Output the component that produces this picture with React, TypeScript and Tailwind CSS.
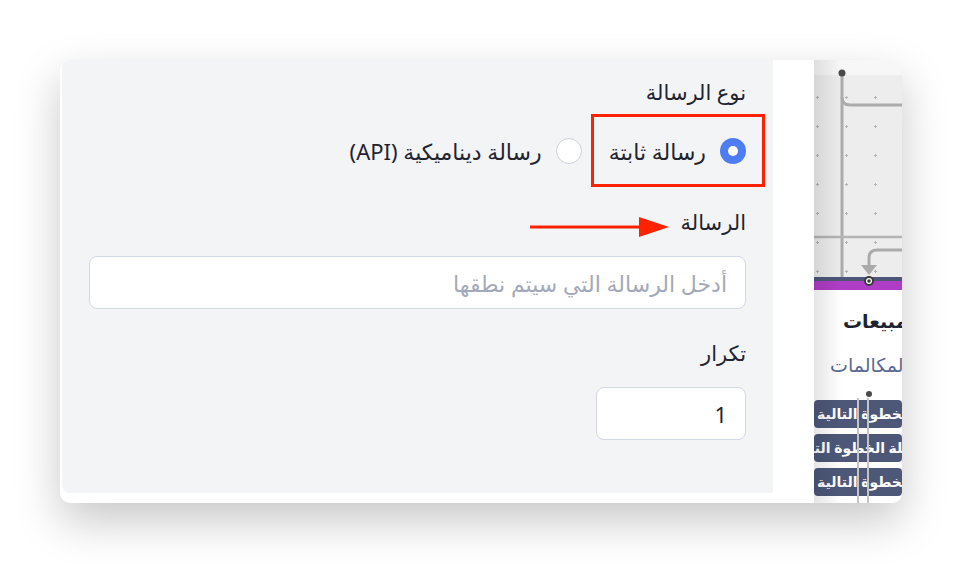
import React, { useState } from 'react';

const Badge = ({ text, shift }: { text: string; shift: string }) => (
    <div className="flex h-[28px] bg-[#4d5879] rounded-[4px] overflow-hidden">
        <span dir="rtl" className={`shrink-0 whitespace-nowrap text-white text-[14px] font-semibold leading-[28px] ${shift}`}>
            {text}
        </span>
    </div>
);

const CanvasStrip = () => (
    <div className="relative w-[88px] shrink-0 flex flex-col overflow-hidden rounded-r-[10px]">
        <div className="h-[15px] bg-[#f7f7f7]" />
        <div className="h-[202px] bg-[#ededed] bg-[radial-gradient(circle,#b4b4b4_1px,transparent_1.3px)] bg-[length:29px_29px] bg-[position:-11px_8px]" />
        <div className="h-[4px] bg-[#4d5879]" />
        <div className="h-[9px] bg-[#b03dc6]" />
        <div className="flex-1 bg-white flex flex-col pt-[18px]">
            <div className="flex pl-[29px] h-[26px]">
                <span dir="rtl" className="shrink-0 whitespace-nowrap text-[19px] font-bold text-[#1c2333] leading-[26px]">
                    المبيعات
                </span>
            </div>
            <div className="flex pl-[16px] h-[26px] mt-[18px]">
                <span dir="rtl" className="shrink-0 whitespace-nowrap text-[19px] text-[#5b6892] leading-[26px]">
                    المكالمات
                </span>
            </div>
            <div className="flex flex-col gap-[6px] mt-[22px]">
                <Badge text="الخطوة التالية" shift="ml-[3px]" />
                <Badge text="مهلة الخطوة التالية" shift="-ml-[24px]" />
                <Badge text="الخطوة التالية" shift="ml-[3px]" />
            </div>
        </div>

        {/* connector lines of the flow diagram */}
        <svg className="absolute inset-0 pointer-events-none" width="88" height="443" viewBox="0 0 88 443">
            <path d="M28 13 V217" stroke="#ababab" strokeWidth="3" fill="none" />
            <path d="M28 37 Q28 45 36 45 H88" stroke="#ababab" strokeWidth="3" fill="none" />
            <path d="M0 177 H88" stroke="#b5b5b5" strokeWidth="2.5" fill="none" />
            <path d="M88 190 H63 Q55 190 55 198 V206" stroke="#ababab" strokeWidth="3" fill="none" />
            <path d="M47 205 H63 L55 215 Z" fill="#ababab" />
            <circle cx="28" cy="13" r="3.5" fill="#4a4a4a" />
            <circle cx="55" cy="221" r="4" fill="#ffffff" stroke="#3a3a3a" strokeWidth="2" />
            <circle cx="55" cy="221" r="1.8" fill="#3a3a3a" />
            <path d="M44 338 V443 M54 338 V443" stroke="#c4c4c4" strokeWidth="2" fill="none" />
            <circle cx="55" cy="334" r="3" fill="#4a4a4a" />
        </svg>
        <div className="absolute inset-y-0 left-0 w-[28px] bg-gradient-to-r from-black/10 to-transparent pointer-events-none" />
    </div>
);

const Radio = ({ checked, label, onClick }: { checked: boolean; label: string; onClick: () => void }) => (
    <button type="button" onClick={onClick} className="flex items-center gap-[14px]">
        {checked ? (
            <span className="w-[26px] h-[26px] rounded-full bg-[#4e7cf2] flex items-center justify-center">
                <span className="w-[10px] h-[10px] rounded-full bg-white" />
            </span>
        ) : (
            <span className="w-[26px] h-[26px] rounded-full bg-white border-[1.5px] border-[#cdd2dc]" />
        )}
        <span className="text-[22px] text-[#1f2430] leading-[30px]">{label}</span>
    </button>
);

const App = () => {
    const [type, setType] = useState<'static' | 'api'>('static');
    const [message, setMessage] = useState('');
    const [repeat, setRepeat] = useState('1');

    return (
        <div className="w-[962px] h-[564px] bg-white pt-[60px] pl-[60px]" style={{ fontFamily: '"Noto Sans", "DejaVu Sans", sans-serif' }}>
            <div className="relative w-[842px] h-[443px] bg-white rounded-[10px] shadow-[0_18px_45px_rgba(0,0,0,0.22)] flex">
                <div dir="rtl" className="w-[711px] h-[433px] ml-[2px] bg-[#f3f4f6] rounded-bl-[8px] rounded-tl-[8px] px-[27px] pt-[17px] flex flex-col">
                    <label className="text-[21px] text-[#1f2430] leading-[30px]">نوع الرسالة</label>
                    <div className="flex items-center gap-[27px] mt-[29px]">
                        <Radio checked={type === 'static'} label="رسالة ثابتة" onClick={() => setType('static')} />
                        <Radio checked={type === 'api'} label="رسالة ديناميكية (API)" onClick={() => setType('api')} />
                    </div>
                    <label className="text-[21px] text-[#1f2430] leading-[30px] mt-[41px]">الرسالة</label>
                    <input
                        type="text"
                        value={message}
                        onChange={(e) => setMessage(e.target.value)}
                        placeholder="أدخل الرسالة التي سيتم نطقها"
                        className="mt-[19px] h-[53px] w-full bg-white border border-[#d3d8e6] rounded-[8px] px-[18px] text-[22px] text-[#1f2430] placeholder:text-[#a3a9b8] outline-none"
                    />
                    <label className="text-[21px] text-[#1f2430] leading-[30px] mt-[29px]">تكرار</label>
                    <input
                        type="text"
                        value={repeat}
                        onChange={(e) => setRepeat(e.target.value)}
                        className="mt-[19px] h-[53px] w-[150px] bg-white border border-[#d3d8e6] rounded-[8px] px-[18px] text-[22px] text-[#1f2430] outline-none"
                    />
                </div>
                <div className="w-[41px] shrink-0" />
                <CanvasStrip />

                {/* annotation overlay */}
                <div className="absolute left-[531px] top-[54px] w-[174px] h-[73px] border-[3px] border-[#ff2200] pointer-events-none" />
                <svg className="absolute left-[469px] top-[155px] pointer-events-none" width="142" height="24" viewBox="0 0 142 24">
                    <path d="M1 12 H114" stroke="#ff2200" strokeWidth="3" />
                    <path d="M110 2 L140 12 L110 22 Z" fill="#ff2200" />
                </svg>
            </div>
        </div>
    );
};

export default App;
